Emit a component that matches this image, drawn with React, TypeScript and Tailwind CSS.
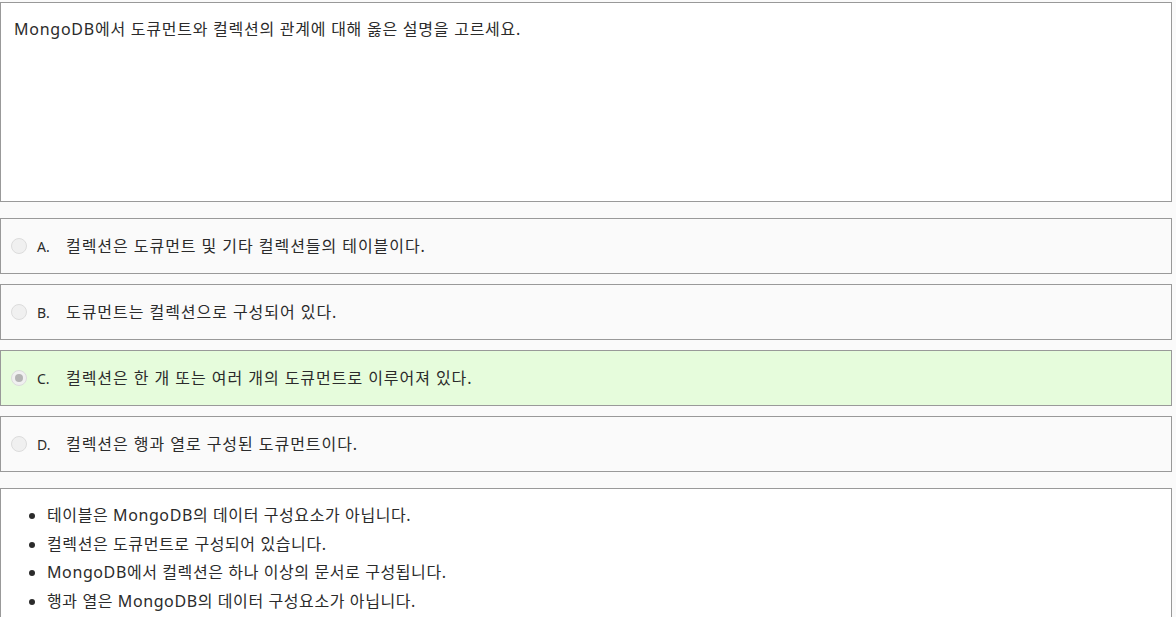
import { FC } from 'react';

const options = [
  { key: 'A', text: '컬렉션은 도큐먼트 및 기타 컬렉션들의 테이블이다.' },
  { key: 'B', text: '도큐먼트는 컬렉션으로 구성되어 있다.' },
  { key: 'C', text: '컬렉션은 한 개 또는 여러 개의 도큐먼트로 이루어져 있다.', selected: true },
  { key: 'D', text: '컬렉션은 행과 열로 구성된 도큐먼트이다.' },
];

const notes = [
  '테이블은 MongoDB의 데이터 구성요소가 아닙니다.',
  '컬렉션은 도큐먼트로 구성되어 있습니다.',
  'MongoDB에서 컬렉션은 하나 이상의 문서로 구성됩니다.',
  '행과 열은 MongoDB의 데이터 구성요소가 아닙니다.',
];

const App: FC = () => {
  return (
    <div
      className="min-h-screen w-[1176px] bg-[#fafafa] pt-[2px] text-[16px] text-[#2b2b2b]"
      style={{ fontFamily: '"Noto Sans", "Noto Sans CJK KR", sans-serif' }}
    >
      <div className="w-[1172px]">
        {/* question */}
        <div className="h-[200px] border border-[#999] bg-white px-[13px] pt-[14px] leading-[24px] tracking-[0.75px]">
          MongoDB에서 도큐먼트와 컬렉션의 관계에 대해 옳은 설명을 고르세요.
        </div>

        {/* choices */}
        <div className="mt-[16px] flex flex-col gap-[10px]">
          {options.map((o) => (
            <div
              key={o.key}
              className={`flex h-[56px] items-center border border-[#999] pl-[10px] ${
                o.selected ? 'bg-[#e6fcdc]' : 'bg-[#fafafa]'
              }`}
            >
              <span className="flex h-[16px] w-[16px] items-center justify-center rounded-full border border-[#dcdcdc] bg-[#f0f0f0]">
                {o.selected && <span className="h-[8px] w-[8px] rounded-full bg-[#b4b4b4]" />}
              </span>
              <span className="ml-[10px] w-[29px] text-[14px]">{o.key}.</span>
              <span className="tracking-[0.95px]">{o.text}</span>
            </div>
          ))}
        </div>

        {/* explanation */}
        <div className="mt-[16px] h-[140px] border border-[#999] bg-white pt-[12px]">
          <ul className="list-disc pl-[46px] leading-[28.5px] tracking-[0.6px]">
            {notes.map((n) => (
              <li key={n}>{n}</li>
            ))}
          </ul>
        </div>
      </div>
    </div>
  );
};

export default App;
